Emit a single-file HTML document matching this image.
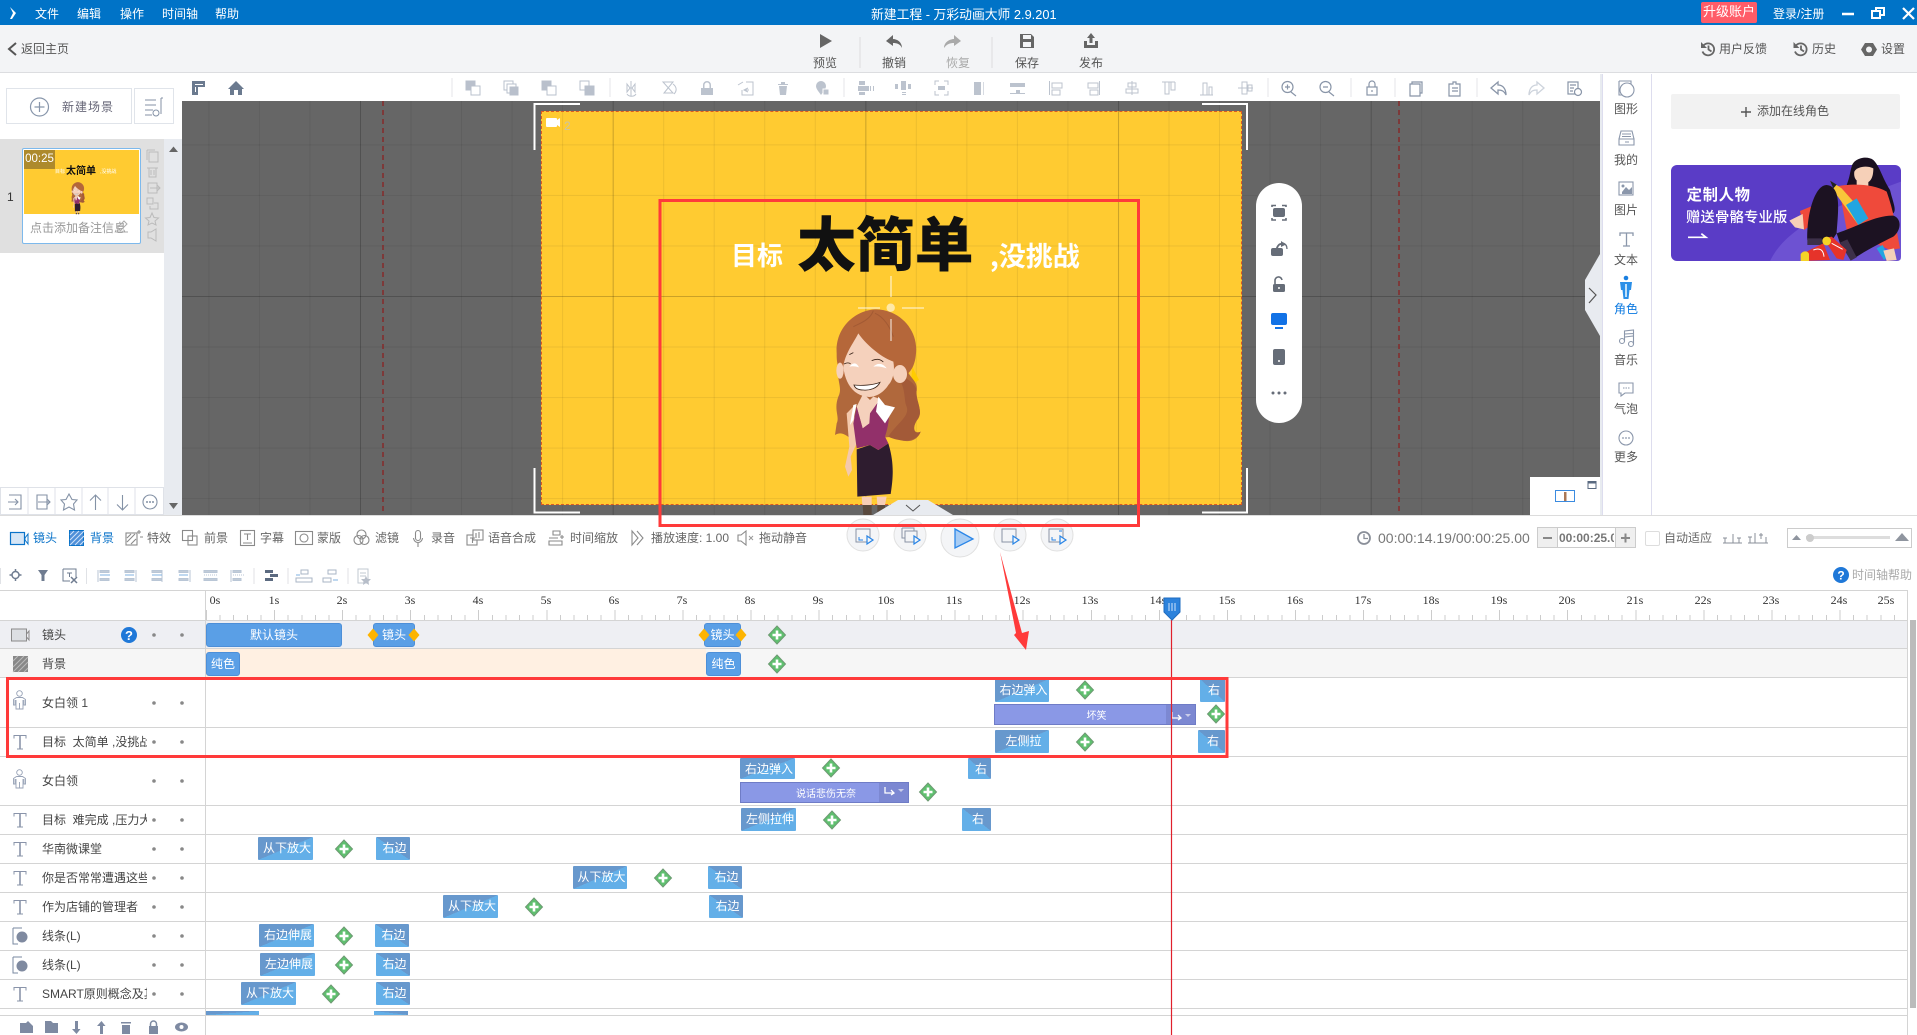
<!DOCTYPE html>
<html lang="zh"><head><meta charset="utf-8"><title>新建工程 - 万彩动画大师 2.9.201</title>
<style>
html,body{margin:0;padding:0;width:1917px;height:1035px;overflow:hidden;background:#fff}
body{position:relative;font:12px/16px "Liberation Sans","Noto Sans CJK SC",sans-serif;color:#555}
div,span{position:absolute;white-space:nowrap;box-sizing:border-box}
.w{color:#fff}.c{text-align:center}
.tb{top:55px;color:#555}
.g{color:#666;top:530px}
.bl{top:530px;color:#0a73c9}
.l{left:42px;color:#444;width:105px;overflow:hidden}
.rl{font:12px/16px "Liberation Serif",serif;color:#333;top:592px;width:30px;text-align:center}
.b{height:23px;line-height:22px;color:#fff;text-align:center;overflow:hidden;border-radius:1px;padding-left:3px}
.i{background:linear-gradient(to bottom right,#6798cd 50%,#63afe8 50%)}
.o{background:linear-gradient(to bottom left,#6798cd 50%,#63afe8 50%)}
.s{background:#5a9fe6;border:1px solid #4d8fd8;border-radius:3px;color:#fff;text-align:center;line-height:22px}
.ln{left:0;width:1907px;height:1px;background:#d4d4d4}
.p{background:#8a98e6;border:1px solid #6f7cc6;height:21px;color:#fff;font-size:10px;line-height:24px;text-align:center;padding-left:3px}
.pe{background:#7c88d2;top:0;bottom:0;right:0}
</style></head><body>

<div style="left:0;top:0;width:1917px;height:25px;background:#0073c7"></div>
<span class="w" style="left:35px;top:6px">文件</span><span class="w" style="left:77px;top:6px">编辑</span><span class="w" style="left:120px;top:6px">操作</span><span class="w" style="left:162px;top:6px">时间轴</span><span class="w" style="left:215px;top:6px">帮助</span>
<span class="w" style="left:871px;top:7px;font-size:12.8px">新建工程 - 万彩动画大师 2.9.201</span>
<div style="left:1701px;top:2px;width:56px;height:21px;background:#ff5c68;border-radius:2px;color:#fff;text-align:center;line-height:20px;font-size:13px">升级账户</div>
<span class="w" style="left:1773px;top:6px;font-size:12px">登录/注册</span>

<div style="left:0;top:25px;width:1917px;height:48px;background:#f3f4f6;border-bottom:1px solid #dcdde0"></div>
<span style="left:21px;top:41px">返回主页</span>
<span class="tb" style="left:813px">预览</span><span class="tb" style="left:882px">撤销</span><span class="tb" style="left:946px;color:#aaa">恢复</span><span class="tb" style="left:1015px">保存</span><span class="tb" style="left:1079px">发布</span>
<span style="left:1719px;top:41px">用户反馈</span><span style="left:1812px;top:41px">历史</span><span style="left:1881px;top:41px">设置</span>

<div style="left:6px;top:88px;width:126px;height:36px;border:1px solid #e0e4ea"></div>
<div style="left:134px;top:88px;width:40px;height:36px;border:1px solid #e0e4ea"></div>
<span style="left:62px;top:99px;letter-spacing:1px;color:#667">新建场景</span>
<div style="left:164px;top:139px;width:18px;height:376px;background:#e8ebf0"></div>
<div style="left:0;top:139px;width:164px;height:114px;background:#e0e0e0"></div>
<span style="left:7px;top:189px;color:#333">1</span>
<div style="left:22px;top:148px;width:119px;height:96px;background:#fff;border:1px solid #7db9ec;border-radius:2px"></div>
<div style="left:24px;top:150px;width:115px;height:64px;background:#ffcb31"></div>
<div style="left:24px;top:150px;width:31px;height:19px;background:#ad8a2c;color:#fff;line-height:18px;text-align:center;font-size:11.5px">00:25</div>
<span style="left:66px;top:165px;font-size:10px;font-weight:700;color:#111;line-height:14px">太简单</span>
<span style="left:55px;top:168px;font-size:5px;color:#fff;line-height:8px">目标</span>
<span style="left:100px;top:168px;font-size:5px;color:#fff;line-height:8px">,没挑战</span>
<div style="left:30px;top:220px;width:96px;overflow:hidden;color:#999;height:16px">点击添加备注信息</div>
<div style="left:0;top:487px;width:164px;height:28px;border:1px solid #dfe2e8"></div>

<div style="left:182px;top:74px;width:1418px;height:27px;background:#fff"></div>
<div style="left:1600px;top:74px;width:2px;height:441px;background:#e8ebf0"></div>

<div style="left:182px;top:101px;width:1418px;height:414px;background:#666;overflow:hidden">
 <div style="left:359px;top:10px;width:701px;height:394px;background:#ffcb31"></div>
 <div style="inset:0;background-image:linear-gradient(90deg,rgba(0,0,0,.15) 1px,transparent 1px),linear-gradient(rgba(0,0,0,.15) 1px,transparent 1px),linear-gradient(90deg,rgba(0,0,0,.07) 1px,transparent 1px),linear-gradient(rgba(0,0,0,.07) 1px,transparent 1px);background-size:252.7px 100%,100% 252.7px,50.54px 100%,100% 50.54px;background-position:178px 0,0 195px,26.4px 0,0 43.4px"></div>
 <div style="left:359px;top:10px;width:701px;height:394px;border:1px dashed #dd5a22"></div>
</div>

<span style="left:731px;top:237px;font:700 26px/36px 'Noto Sans CJK SC',sans-serif;color:#fff">目标</span>
<span style="left:797px;top:201px;font:900 59px/80px 'Noto Sans CJK SC',sans-serif;color:#111;letter-spacing:-.2px">太简单</span>
<span style="left:990px;top:237px;font:700 27px/36px 'Noto Sans CJK SC',sans-serif;color:#fff">,没挑战</span>

<div style="left:1256px;top:183px;width:46px;height:240px;background:#fff;border-radius:23px"></div>
<div style="left:1530px;top:477px;width:70px;height:38px;background:#fff"></div>

<div style="left:1602px;top:74px;width:50px;height:441px;background:#fff;border-left:1px solid #dde;border-right:1px solid #dde"></div>
<span style="left:1614px;top:101px">图形</span><span style="left:1614px;top:152px">我的</span><span style="left:1614px;top:202px">图片</span><span style="left:1614px;top:252px">文本</span><span style="left:1614px;top:301px;color:#0a78e0">角色</span><span style="left:1614px;top:352px">音乐</span><span style="left:1614px;top:401px">气泡</span><span style="left:1614px;top:449px">更多</span>
<div style="left:1671px;top:94px;width:229px;height:35px;background:#f2f2f2;border-radius:2px"></div>
<span style="left:1757px;top:103px;color:#555">添加在线角色</span>
<div style="left:1671px;top:165px;width:230px;height:96px;background:#5a3cc6;border-radius:6px"></div>

<div style="left:0;top:515px;width:1917px;height:1px;background:#dcdcdc"></div>
<span class="bl" style="left:33px">镜头</span><span class="bl" style="left:90px">背景</span>
<span class="g" style="left:147px">特效</span><span class="g" style="left:204px">前景</span><span class="g" style="left:260px">字幕</span><span class="g" style="left:317px">蒙版</span><span class="g" style="left:375px">滤镜</span><span class="g" style="left:431px">录音</span><span class="g" style="left:488px">语音合成</span><span class="g" style="left:570px">时间缩放</span><span class="g" style="left:651px">播放速度: 1.00</span><span class="g" style="left:759px">拖动静音</span>

<span style="left:1378px;top:530px;font-size:14px;color:#777">00:00:14.19/00:00:25.00</span>
<div style="left:1537px;top:527px;width:99px;height:21px;border:1px solid #ccc;background:#fff"></div>
<div style="left:1537px;top:527px;width:21px;height:21px;background:#efefef;border:1px solid #ccc"></div>
<div style="left:1615px;top:527px;width:21px;height:21px;background:#efefef;border:1px solid #ccc"></div>
<div style="left:1559px;top:530px;width:55px;overflow:hidden;font-weight:700;color:#777;font-size:12px">00:00:25.00</div>
<div style="left:1645px;top:531px;width:15px;height:15px;border:1px solid #ddd;border-radius:2px"></div>
<span style="left:1664px;top:530px;color:#666">自动适应</span>
<div style="left:1787px;top:528px;width:125px;height:20px;border:1px solid #ccc"></div>
<div style="left:1806px;top:536px;width:84px;height:3px;background:#ddd"></div>
<div style="left:1806px;top:534px;width:8px;height:8px;border-radius:4px;background:#ccc"></div>
<span style="left:1852px;top:567px;color:#aaa">时间轴帮助</span>

<div class="ln" style="top:590px"></div>
<div style="left:205.7px;top:610px;width:1701px;height:10px;background:repeating-linear-gradient(90deg,#ccc 0 1px,transparent 1px 68.06px) 0 0/100% 10px no-repeat,repeating-linear-gradient(90deg,#ccc 0 1px,transparent 1px 13.612px) 0 5px/100% 5px no-repeat"></div>
<span class="rl" style="left:200px">0s</span><span class="rl" style="left:259px">1s</span><span class="rl" style="left:327px">2s</span><span class="rl" style="left:395px">3s</span><span class="rl" style="left:463px">4s</span><span class="rl" style="left:531px">5s</span><span class="rl" style="left:599px">6s</span><span class="rl" style="left:667px">7s</span><span class="rl" style="left:735px">8s</span><span class="rl" style="left:803px">9s</span><span class="rl" style="left:871px">10s</span><span class="rl" style="left:939px">11s</span><span class="rl" style="left:1007px">12s</span><span class="rl" style="left:1075px">13s</span><span class="rl" style="left:1143px">14s</span><span class="rl" style="left:1212px">15s</span><span class="rl" style="left:1280px">16s</span><span class="rl" style="left:1348px">17s</span><span class="rl" style="left:1416px">18s</span><span class="rl" style="left:1484px">19s</span><span class="rl" style="left:1552px">20s</span><span class="rl" style="left:1620px">21s</span><span class="rl" style="left:1688px">22s</span><span class="rl" style="left:1756px">23s</span><span class="rl" style="left:1824px">24s</span><span class="rl" style="left:1871px">25s</span>

<div style="left:0;top:620px;width:1907px;height:28px;background:#eeeff3"></div>
<div style="left:0;top:648px;width:1907px;height:30px;background:#f6f6f6"></div>
<div style="left:206px;top:649px;width:500px;height:28px;background:#fff0e2"></div>
<div class="ln" style="top:620px"></div><div class="ln" style="top:648px"></div><div class="ln" style="top:677px"></div><div class="ln" style="top:727px"></div><div class="ln" style="top:756px"></div><div class="ln" style="top:805px"></div><div class="ln" style="top:834px"></div><div class="ln" style="top:863px"></div><div class="ln" style="top:892px"></div><div class="ln" style="top:921px"></div><div class="ln" style="top:950px"></div><div class="ln" style="top:979px"></div><div class="ln" style="top:1008px"></div><div class="ln" style="top:1015px"></div>
<div style="left:205px;top:590px;width:1px;height:445px;background:#d4d4d4"></div>
<div style="left:1907px;top:590px;width:1px;height:445px;background:#d4d4d4"></div>
<div style="left:1910px;top:620px;width:6px;height:388px;background:#bbb"></div>

<span class="l" style="top:627px">镜头</span><span class="l" style="top:656px">背景</span><span class="l" style="top:695px">女白领 1</span><span class="l" style="top:734px">目标&nbsp;&nbsp;太简单 ,没挑战</span><span class="l" style="top:773px">女白领</span><span class="l" style="top:812px">目标&nbsp;&nbsp;难完成 ,压力大</span><span class="l" style="top:841px">华南微课堂</span><span class="l" style="top:870px">你是否常常遭遇这些</span><span class="l" style="top:899px">作为店铺的管理者</span><span class="l" style="top:928px">线条(L)</span><span class="l" style="top:957px">线条(L)</span><span class="l" style="top:986px">SMART原则概念及其</span>

<div class="s" style="left:206px;top:623px;width:136px;height:24px">默认镜头</div>
<div class="s" style="left:373px;top:623px;width:42px;height:24px">镜头</div>
<div class="s" style="left:704px;top:623px;width:37px;height:24px">镜头</div>
<div class="s" style="left:206px;top:652px;width:34px;height:24px">纯色</div>
<div class="s" style="left:706px;top:652px;width:35px;height:24px">纯色</div>

<div class="b i" style="left:995px;top:679px;width:54px">右边弹入</div>
<div class="b o" style="left:1200px;top:679px;width:25px">右</div>
<div class="p" style="left:994px;top:704px;width:202px">坏笑<div class="pe" style="left:171px"></div></div>
<div class="b i" style="left:995px;top:730px;width:54px">左侧拉</div>
<div class="b o" style="left:1198px;top:730px;width:27px">右</div>
<div class="b i" style="left:740px;top:758px;width:55px;height:21px">右边弹入</div>
<div class="b o" style="left:968px;top:758px;width:23px;height:21px">右</div>
<div class="p" style="left:740px;top:782px;width:169px">说话悲伤无奈<div class="pe" style="left:138px"></div></div>
<div class="b i" style="left:741px;top:808px;width:55px">左侧拉伸</div>
<div class="b o" style="left:962px;top:808px;width:29px">右</div>
<div class="b i" style="left:258px;top:837px;width:55px">从下放大</div>
<div class="b o" style="left:376px;top:837px;width:34px">右边</div>
<div class="b i" style="left:573px;top:866px;width:54px">从下放大</div>
<div class="b o" style="left:708px;top:866px;width:34px">右边</div>
<div class="b i" style="left:443px;top:895px;width:55px">从下放大</div>
<div class="b o" style="left:709px;top:895px;width:34px">右边</div>
<div class="b i" style="left:259px;top:924px;width:55px">右边伸展</div>
<div class="b o" style="left:375px;top:924px;width:34px">右边</div>
<div class="b i" style="left:260px;top:953px;width:55px">左边伸展</div>
<div class="b o" style="left:376px;top:953px;width:34px">右边</div>
<div class="b i" style="left:241px;top:982px;width:55px">从下放大</div>
<div class="b o" style="left:376px;top:982px;width:34px">右边</div>
<div class="i" style="left:206px;top:1011px;width:53px;height:4px"></div>
<div class="o" style="left:374px;top:1011px;width:34px;height:4px"></div>

<svg style="position:absolute;left:0;top:0" width="1917" height="1035" viewBox="0 0 1917 1035">
<defs>
<g id="p"><polygon points="0,-9 8.5,0 0,9 -8.5,0" fill="#5fc06f" stroke="#6d9a72"/><path d="M0-4.5V4.5M-4.5 0H4.5" stroke="#fff" stroke-width="2.6"/></g>
<g id="d"><polygon points="0,-6.5 5.5,0 0,6.5 -5.5,0" fill="#fdb400"/></g>
<g id="tt" fill="none" stroke="#8a94aa"><path d="M-6-3.5V-6.5H6V-3.5M-3 7H3"/><path d="M0-6.5V7" stroke-width="1.6"/></g>
<g id="dots"><circle cx="0" r="1.8" fill="#888"/><circle cx="28" r="1.8" fill="#888"/></g>
<g id="fig" fill="none" stroke="#97a2b6" stroke-width=".9"><circle cx="0" cy="-6.500" r="2.800"/><path d="M-3-2.500H3L6-.5V5H4.500V0M-3-2.500L-6-.5V5H-4.500V0M-3.500 0V9H3.500V0M0 3V9"/></g>
<g id="shp"><path d="M-7-8H2M-7-8V8H-2" fill="none" stroke="#7a88a0"/><circle cx="2" cy="1" r="5.500" fill="#7f8aa0"/></g>
<g id="girl">
 <path d="M817 560l20 40-25 15z" fill="#fc0"/>
 <path d="M600 560C585 600 610 620 595 650 580 690 600 710 590 730L585 765C610 750 625 775 640 780L760 770C790 790 830 790 842 755 820 765 815 740 835 715 850 690 825 660 830 630 835 600 800 590 800 560Z" fill="#b0683c"/>
 <path d="M770 590C800 620 790 660 800 680 810 710 770 730 745 770 775 785 830 790 842 755 820 765 815 740 835 715 850 690 825 660 830 630 825 610 800 590 770 590Z" fill="#a35a38"/>
 <path d="M590 520C585 440 650 388 710 388 780 390 835 450 828 520 825 560 810 580 790 590L610 590C590 560 590 540 590 520Z" fill="#b5673a"/>
 <path d="M700 392C690 420 660 430 640 440M705 400C730 410 750 440 760 470" stroke="#a25a34" stroke-width="3" fill="none"/>
 <path d="M620 700L640 680 650 790 632 830 636 870 625 890 615 860 628 800Z" fill="#f4c9ac"/>
 <path d="M670 640L690 660 700 650 715 655 706 700 690 730 668 745 650 680Z" fill="#f5d1bc"/>
 <path d="M610 560C615 520 640 490 655 460 675 490 720 530 760 545 765 570 760 600 745 615 730 640 700 655 680 650 640 645 615 610 610 560Z" fill="#f5d1bc"/>
 <ellipse cx="780" cy="582" rx="21" ry="27" fill="#f5d1bc"/><ellipse cx="600" cy="572" rx="11" ry="24" fill="#f5d1bc"/>
 <path d="M628 560C640 545 650 548 657 562 645 558 635 558 628 560ZM700 560C712 548 728 548 740 565 725 560 712 558 700 560Z" fill="#fff"/>
 <path d="M628 524L640 518M695 542C710 535 722 538 730 546M612 552C620 548 628 548 632 552" stroke="#3a2418" stroke-width="2.5" fill="none"/>
 <path d="M642 615C665 618 700 615 720 607 712 625 690 632 670 630 655 630 645 625 642 615Z" fill="#fff" stroke="#3a2418" stroke-width="2.5"/>
 <path d="M650 808L652 950 752 942C762 880 760 840 745 790L715 810 690 795Z" fill="#2e1c2f"/>
 <path d="M650 680L640 730 650 805 690 795 715 810 745 790 735 770C745 740 750 710 745 680L715 665 690 700 688 730 668 745Z" fill="#92306a"/>
 <path d="M640 675L650 672 640 720 630 735ZM708 695L735 730 765 682 735 675 715 650Z" fill="#fff"/>
 <path d="M665 950H695V975H667ZM710 950H740L735 975H712Z" fill="#f6cdb6"/>
 <path d="M668 975H695V1005H670ZM712 975H735V1005H712Z" fill="#5a4a3e"/>
</g>
</defs>

<!-- title bar -->
<path d="M10 7L16 13 12 19H10L13 13Z" fill="#fff"/>
<path d="M1842 14H1854" stroke="#fff" stroke-width="2.5"/>
<path d="M1876 11V8H1884V15H1880M1872 11H1880V18H1872Z" fill="none" stroke="#fff" stroke-width="2"/>
<path d="M1903 8L1914 19M1914 8L1903 19" stroke="#fff" stroke-width="2.2"/>

<!-- top toolbar -->
<path d="M16 43L9 49 16 55" fill="none" stroke="#555" stroke-width="2"/>
<path d="M820 34L832 41 820 48Z" fill="#666"/>
<path d="M902 48C902 42 897 39 893 39V35L886 41 893 46V43C897 43 900 44 902 48Z" fill="#666"/>
<path d="M945 48C945 42 951 39 955 39V35L962 41 955 46V43C951 43 948 44 945 48Z" fill="#aaa" transform="translate(-1 0)"/>
<path d="M1020 34H1031L1034 37V48H1020Z" fill="#666"/><rect x="1023" y="35" width="8" height="4" fill="#f3f4f6"/><rect x="1023" y="42" width="8" height="5" fill="#f3f4f6"/>
<path d="M1084 41H1087V45H1095V41H1098V48H1084ZM1091 33L1095 38H1092.5V43H1089.500V38H1087Z" fill="#666"/>
<path d="M860 37V68M992 37V68" stroke="#ddd"/>
<g fill="none" stroke="#666" stroke-width="1.8">
<path d="M1703.500 45.500A6 6 0 1 1 1702.500 51.500"/><path d="M1708.500 45.500V49.500L1711.500 51.500"/>
<path d="M1796 45.500A6 6 0 1 1 1795 51.500"/><path d="M1801 45.500V49.500L1804 51.500"/>
</g>
<path d="M1701 42V48H1707ZM1793.500 42V48H1799.500Z" fill="#666"/>
<polygon points="1865,43 1873,43 1877,49.500 1873,56 1865,56 1861,49.500" fill="#666"/><circle cx="1869" cy="49.500" r="3" fill="#f3f4f6"/>

<!-- left panel -->
<circle cx="39.500" cy="107" r="9" fill="none" stroke="#8896ab" stroke-width="1.2"/><path d="M34.500 107H44.500M39.500 102V112" stroke="#8896ab" stroke-width="1.2"/>
<path d="M145 100H156M145 105H156M145 110H153M145 115H152M161 98V114" stroke="#8492a6" fill="none"/><path d="M161 98H163" stroke="#8492a6"/><circle cx="156" cy="113" r="3" fill="none" stroke="#8492a6"/>
<path d="M169 152L178 152 173.500 146.500Z" fill="#666"/>
<path d="M169 503H178L173.500 509Z" fill="#666"/>
<g fill="none" stroke="#bbb">
 <path d="M149 152H158V162H149ZM147 150H155M147 150V160"/>
 <path d="M147 168H158M149 168V177H156V168M151 170V175M154 170V175"/>
 <path d="M148 183H157V193H148ZM150 188H160M157 185L160 188 157 191"/>
 <path d="M147 198H153V204H147ZM152 209H158V203H154M150 206V209H152"/>
 <path d="M152 213L154 217.500 158.500 218 155 221 156 225 152 223 148 225 149 221 145.500 218 150 217.500Z"/>
 <path d="M148 232H151L156 229V241L151 238H148Z"/>
</g>
<path d="M118 227L124 221 127 224 121 230H118ZM116 232H128" fill="none" stroke="#aaa"/>
<path d="M28 487V515M55 487V515M82 487V515M108 487V515M135 487V515" stroke="#dfe2e8"/>
<g fill="none" stroke="#8492a6" stroke-width="1.1">
 <path d="M9 495H21V509H9M8 502H18M15 499L18 502 15 505"/>
 <path d="M37 495H47V509H37ZM38 502H50M47 499L50 502 47 505"/>
 <path d="M69 494L72 499.500 77 500 73.500 504 74.500 510 69 507 63.500 510 64.500 504 61 500 66 499.500Z"/>
 <path d="M95.500 510V495M90 500.500L95.500 495 101 500.500"/>
 <path d="M122.500 495V510M117 504.500L122.500 510 128 504.500"/>
 <circle cx="150" cy="502" r="7"/>
</g>
<circle cx="147" cy="502" r="1" fill="#8492a6"/><circle cx="150" cy="502" r="1" fill="#8492a6"/><circle cx="153" cy="502" r="1" fill="#8492a6"/>
<use href="#girl" transform="translate(41 162) scale(.052)"/>

<!-- canvas toolbar -->
<path d="M192 81H205V87H198V95H192Z" fill="#6b7a8f"/><path d="M195 84H203V85H195ZM195 87V92H196V87Z" fill="#fff"/>
<path d="M236 81L244 89H242V95H238V90H234V95H230V89H228Z" fill="#6b7a8f"/>
<path d="M452 78V97M610 78V97M844 78V97M1268 78V97M1351 78V97M1395 78V97M1477 78V97" stroke="#e4e6ea"/>
<g fill="#b9c0cc" stroke="#b9c0cc">
 <rect x="466" y="81" width="9" height="9"/><rect x="471" y="86" width="9" height="9" fill="#fff"/>
 <rect x="504" y="81" width="9" height="9" fill="#fff"/><rect x="507" y="84" width="9" height="9" fill="#fff"/><rect x="510" y="87" width="8" height="8"/>
 <rect x="542" y="81" width="9" height="9"/><rect x="547" y="86" width="9" height="9" fill="#fff"/>
 <rect x="580" y="81" width="9" height="9" fill="#fff"/><rect x="585" y="86" width="9" height="9"/>
</g>
<g fill="none" stroke="#bcc3ce">
 <path d="M631 81V96M627 84L630 88 627 92ZM635 84L632 88 635 92ZM627 94C629 97 634 97 636 94"/>
 <path d="M663 82H673L664 93H673ZM673 84C677 87 677 91 674 94"/>
 <path d="M738 85L743 82M746 82H753V95H742V90M748 88L744 90 748 92M744 90H749"/>
 <path d="M1049.500 81V95M1052 83H1062V88H1052ZM1052 90H1060V95H1052Z"/>
 <path d="M1099.500 81V95M1088 83H1098V88H1088ZM1090 90H1098V95H1090Z"/>
 <path d="M1132 81V95M1128 83H1136V87H1128ZM1126 89H1138V93H1126Z"/>
 <path d="M1162 82H1175M1165 82V94H1169V82M1171 82V90H1175V82"/>
 <path d="M1200 95H1213M1203 83V95H1207V83ZM1209 87V95H1212V87Z"/>
 <path d="M1238 88H1253M1242 82V94H1247V82ZM1248 85V91H1252V85Z"/>
</g>
<g fill="#bcc3ce">
 <path d="M701 88H713V95H701Z"/><path d="M703 88V85A4 4 0 0 1 711 85V88H709.500V85A2.500 2.500 0 0 0 704.500 85V88Z"/>
 <path d="M778 84H788V85H778ZM781 82H785V84H781ZM779 86H787L786 95H780Z"/>
 <path d="M821 81A5 5 0 0 1 826 86C826 89 823 92 821 95 819 92 816 89 816 86A5 5 0 0 1 821 81Z"/><rect x="823" y="89" width="6" height="6" stroke="#fff"/>
 <rect x="859" y="81" width="6" height="4"/><rect x="858" y="86" width="11" height="5"/><rect x="859" y="92" width="6" height="3"/><rect x="870" y="86" width="1" height="5"/><rect x="873" y="86" width="1" height="5"/>
 <rect x="901" y="81" width="5" height="9"/><rect x="895" y="84" width="3" height="5"/><rect x="908" y="84" width="3" height="5"/><rect x="902" y="92" width="4" height="1"/><rect x="902" y="94" width="4" height="1"/>
 <rect x="974" y="82" width="7" height="13"/><rect x="983" y="82" width="1" height="13" opacity=".6"/>
 <rect x="1010" y="83" width="15" height="4"/><rect x="1010" y="93" width="15" height="1"/><rect x="1016" y="90" width="4" height="3"/>
 <rect x="938" y="86" width="7" height="4"/>
</g>
<path d="M935 85V81H939M944 81H948V85M948 91V95H944M939 95H935V91" fill="none" stroke="#bcc3ce"/>
<g fill="none" stroke="#8995a8" stroke-width="1.2">
 <rect x="1367" y="87" width="10" height="8"/><path d="M1369 87V84A3 3 0 0 1 1375 84V87M1372 90V92"/>
 <path d="M1449 84H1453V82H1456V84H1460V96H1449Z"/><path d="M1452 88H1458M1452 91H1458"/>
 <path d="M1410 84H1420V96H1410ZM1412 84V82H1422V93H1420"/>
 <rect x="1568" y="82" width="10" height="12"/><path d="M1570 85H1576M1570 88H1574M1570 91H1573"/><circle cx="1578" cy="92" r="3.500" fill="#fff"/>
 <path d="M1282 87A5.500 5.500 0 1 0 1293 87 5.500 5.500 0 1 0 1282 87M1291 92L1296 96M1285 87H1290M1287.500 84.500V89.500"/>
 <path d="M1320 87A5.500 5.500 0 1 0 1331 87 5.500 5.500 0 1 0 1320 87M1329 92L1334 96M1323 87H1328"/>
</g>
<path d="M1491 88L1498 82V85C1503 85 1506 89 1506 95 1504 91 1502 90 1498 90V94Z" fill="none" stroke="#8995a8" stroke-width="1.3"/>
<path d="M1544 88L1537 82V85C1532 85 1529 89 1529 95 1531 91 1533 90 1537 90V94Z" fill="none" stroke="#cdd3dc" stroke-width="1.3"/>

<!-- canvas overlays -->
<path d="M383 101V515M1399 101V515" stroke="#8d1c1c" stroke-width="1.200" stroke-dasharray="5 4"/>
<path d="M580 104H534.500V150M1202 104H1247V150M534.500 468V512.500H580M1247 468V512.500H1202" fill="none" stroke="#fff" stroke-width="2"/>
<rect x="546" y="118" width="11" height="9" rx="1" fill="#fff"/><path d="M557 120L560 118V127L557 125Z" fill="#fff"/>
<text x="564" y="130" font-family="Liberation Sans" font-size="12" fill="#c9c4a8">2</text>
<svg x="640" y="180" width="520" height="340" viewBox="0 0 1560 1020"><use href="#girl"/></svg>
<path d="M891 276V297M891 319V341M858 308H880M902 308H924" stroke="#fff" stroke-opacity=".7" stroke-width="1.300"/><circle cx="890.700" cy="307.700" r="4.200" fill="#ffe9a8"/>
<polygon points="873,515 898,500 928,500 953,515" fill="#e8ebf0"/><path d="M906 505L913 511 920 505" fill="none" stroke="#555"/>
<polygon points="1600,254 1585,280 1585,310 1600,336" fill="#e8ebf0"/><path d="M1589 288L1596 295 1589 303" fill="none" stroke="#555" stroke-width="1.200"/>

<!-- pill icons -->
<g fill="#666d78">
 <rect x="1273" y="208" width="12" height="9" rx="2"/><path d="M1272 207V205.500H1276M1282 205.500H1286V207M1286 218V220H1282M1276 220H1272V218" fill="none" stroke="#666d78" stroke-width="1.600"/>
 <rect x="1271" y="248" width="12" height="8" rx="2"/><path d="M1276 248C1277 245 1279 243 1281 243V241L1286 244.500 1281 247V245C1279.500 245 1278.500 246.500 1278 248Z"/><path d="M1283 243C1286 244 1287 246 1287 249" fill="none" stroke="#666d78" stroke-width="1.300"/>
 <rect x="1273" y="284" width="12" height="8" rx="1.500"/><path d="M1275 284V281A3.500 3.500 0 0 1 1282 280" fill="none" stroke="#666d78" stroke-width="1.600"/>
 <rect x="1273" y="349" width="12" height="16" rx="2"/>
 <circle cx="1273" cy="393" r="1.500"/><circle cx="1279" cy="393" r="1.500"/><circle cx="1285" cy="393" r="1.500"/>
</g>
<circle cx="1279" cy="288" r="1" fill="#fff"/><circle cx="1279" cy="361" r="1" fill="#fff"/>
<rect x="1271" y="313" width="16" height="12" rx="2" fill="#1272e6"/><rect x="1275" y="327" width="8" height="2" fill="#1272e6"/>

<!-- mini map -->
<rect x="1555.500" y="490.500" width="19" height="11" fill="#fff" stroke="#3b8be0"/><rect x="1564" y="492" width="2.500" height="9" fill="#a75"/>
<rect x="1588" y="481.500" width="8" height="7" fill="#fff" stroke="#5a6a80"/><rect x="1588" y="481" width="8" height="2.500" fill="#5a6a80"/>

<!-- right strip icons -->
<g fill="none" stroke="#8b97ab" stroke-width="1.100">
 <path d="M1619 81H1631V86"/><path d="M1619 81V95H1623"/><circle cx="1627" cy="90" r="7" fill="#fff"/>
 <path d="M1619 139H1634V145H1619ZM1619 139L1621 131H1632L1634 139M1622 134H1631M1622 136.500H1631M1625 142H1629"/>
 <rect x="1619" y="182" width="14" height="13"/>
 <path d="M1620 236V233H1633V236M1626.500 233V246M1623 246H1630" stroke-width="1.300"/>
 <path d="M1619 383H1633V393H1625L1621 396V393H1619Z"/>
 <circle cx="1626" cy="438" r="7"/>
 <circle cx="1622" cy="341" r="2.500"/><circle cx="1631" cy="344" r="2.500"/><path d="M1624.500 341V331L1633.500 330V344M1625 334L1633 333.500M1625 337L1633 336"/>
</g>
<path d="M1622 192L1626 187 1629 190 1632 187V194H1622Z" fill="#8b97ab"/><circle cx="1623" cy="186" r="1.500" fill="#8b97ab"/>
<path d="M1623 388H1630" stroke="#8b97ab" stroke-dasharray="1.500 1"/>
<circle cx="1623" cy="438" r=".9" fill="#8b97ab"/><circle cx="1626" cy="438" r=".9" fill="#8b97ab"/><circle cx="1629" cy="438" r=".9" fill="#8b97ab"/>
<circle cx="1626" cy="278" r="2.300" fill="#1a7fe0"/><path d="M1620 282H1632L1631 290H1629.500L1628.500 299H1623.500L1622.500 290H1621Z" fill="#2a8fe8"/><path d="M1625 284V297H1627V284Z" fill="#bfe0fa"/>
<path d="M1741 112H1751M1746 107V117" stroke="#555" stroke-width="1.400"/>

<!-- banner -->
<svg x="1660" y="150" width="250" height="120" viewBox="0 0 750 360">
 <path d="M330 333C380 230 520 170 723 95V321Q723 333 711 333Z" fill="#6d52d2"/>
 <path d="M575 50C580 25 620 15 640 30 660 50 665 80 690 120 700 160 710 180 700 190L620 110 560 105C570 80 570 65 575 50Z" fill="#1a1020"/>
 <rect x="590" y="92" width="35" height="20" fill="#f6d0b8"/>
 <path d="M583 65C590 50 620 45 640 55 640 85 630 100 610 100 590 98 580 85 583 65Z" fill="#f6d0b8"/>
 <path d="M525 110C570 100 640 100 680 125 700 180 710 240 720 295L690 300 560 240 540 130Z" fill="#ef4a3b"/>
 <polygon points="420,183 452,170 470,215 432,240" fill="#ef4a3b"/>
 <path d="M388 212L412 200 428 192 432 238 405 232Z" fill="#f6d0b8"/>
 <polygon points="510,92 545,115 625,205 595,225 530,135" fill="#f8c63a"/>
 <polygon points="558,165 590,145 625,205 595,225" fill="#22a5e0"/>
 <polygon points="510,92 530,104 520,115" fill="#222"/>
 <path d="M442 270C440 190 465 105 500 105 545 110 535 180 530 250L520 265 490 280Z" fill="#1c1222"/>
 <path d="M442 265L485 265 490 285 442 285Z" fill="#3d3049"/>
 <path d="M530 250C590 230 650 195 700 197 725 205 725 240 700 260 660 280 620 300 575 330L540 280Z" fill="#1c1222"/>
 <path d="M540 278L562 268 590 322 572 332Z" fill="#3d3049"/>
 <polygon points="650,295 668,285 685,320 672,330" fill="#22a5e0"/>
 <path d="M670 302L702 295 710 330 680 333Z" fill="#f6d0b8"/>
 <path d="M425 315C445 300 480 285 490 280L510 330 425 333Z" fill="#e6332a"/>
 <path d="M422 312C430 300 445 303 447 312V333H422Z" fill="#f5d327"/>
 <path d="M490 265L515 260 560 300 550 330 530 325Z" fill="#e6332a"/>
 <circle cx="500" cy="273" r="13" fill="#f5d327"/>
 <path d="M460 300C480 292 490 300 492 320M515 280L548 298" stroke="#fff" stroke-width="3" fill="none"/>
 <text x="80" y="150" font-family="Noto Sans CJK SC" font-weight="700" font-size="46" letter-spacing="2" fill="#fff">定制人物</text>
 <text x="78" y="216" font-family="Noto Sans CJK SC" font-weight="500" font-size="43" fill="#fff" textLength="304">赠送骨骼专业版</text>
 <path d="M84 262H138L124 251" fill="none" stroke="#fff" stroke-width="5"/>
</svg>

<!-- play controls -->
<g fill="#f4f5f7" stroke="#e0e0e0"><circle cx="863" cy="535" r="16"/><circle cx="910" cy="535" r="16"/><circle cx="960" cy="538" r="19"/><circle cx="1010" cy="535" r="16"/><circle cx="1057" cy="535" r="16"/></g>
<g fill="none" stroke="#8a94a6">
 <path d="M856 529H870V542H856Z"/><path d="M905 531H917V542H905Z"/><path d="M902 528H914V531M902 528V538H905"/><path d="M1002 529H1016V542H1002Z"/><path d="M1049 529H1063V542H1049Z"/>
</g>
<g fill="none" stroke="#2784e6"><path d="M859 537V540H863"/><path d="M1052 537V540H1056M1059 531H1062"/></g>
<g fill="#f4f5f7" stroke="#2784e6" stroke-width="1.200"><path d="M867 536L873 540 867 544Z"/><path d="M914 536L920 540 914 544Z"/><path d="M1013 536L1019 540 1013 544Z"/><path d="M1060 536L1066 540 1060 544Z"/></g>
<path d="M955 529L973 539 955 548Z" fill="#a9cdf4" stroke="#2b86e8" stroke-width="1.300"/>

<!-- effect toolbar -->
<rect x="10.500" y="532.500" width="14" height="12" fill="#d6e6f6" stroke="#0a73c9" stroke-width="1.200"/><path d="M25 538L28 534V544L25 540Z" fill="none" stroke="#0a73c9"/>
<rect x="69.500" y="530.500" width="14" height="15" fill="#4f8fd8" stroke="#0a73c9"/><path d="M70 535L74 531M70 540L79 531M70 545L84 531M75 545L84 536M80 545L84 541" stroke="#cfe3f8"/>
<g fill="none" stroke="#8a8a8a" stroke-width="1.100">
 <rect x="126" y="533" width="11" height="12"/><path d="M127 542L135 534M127 538L131 534M131 544L136 539M139 530V534M137 532H141M140 537H143"/>
 <rect x="182.500" y="530.500" width="10" height="10"/><rect x="188" y="536" width="9" height="9"/>
 <rect x="240.500" y="530.500" width="14" height="15"/><path d="M244 534H251M247.500 534V540M243 543H252"/>
 <rect x="295.500" y="531.500" width="17" height="13"/><circle cx="304" cy="538" r="4"/>
 <circle cx="361.500" cy="534.500" r="4.500"/><circle cx="358.500" cy="540" r="4.500"/><circle cx="364.500" cy="540" r="4.500"/>
 <rect x="415.500" y="530.500" width="5" height="10" rx="2.500"/><path d="M413.500 538C414 544 422 544 422.500 538M418 543V547"/>
 <rect x="467" y="535" width="10" height="10"/><rect x="473" y="530" width="10" height="10" fill="#fff"/><path d="M470 538H475M472.500 538V543M476 533V538M479 532V538"/>
 <path d="M553 531H560V535H553ZM549 538H558M549 541H562V545H549ZM562 535V539M560 537H564"/>
 <path d="M632 531L638 538 632 545ZM637 531L643 538 637 545"/>
 <path d="M738 535H741L746 531V545L741 541H738Z"/>
</g>
<path d="M749 536L753 540M753 536L749 540" stroke="#999"/>
<circle cx="1364" cy="538" r="6" fill="none" stroke="#8a8f99" stroke-width="1.800"/><path d="M1364 534V538.500H1368" fill="none" stroke="#8a8f99" stroke-width="1.300"/>
<path d="M1543 538H1552" stroke="#888" stroke-width="2"/><path d="M1621 538H1630M1625.500 533.500V542.500" stroke="#888" stroke-width="2"/>
<path d="M1723 543H1742M1725 543V538M1723 538H1727M1733 543V534M1737 538H1741M1739 538V543M1748 543H1768M1750 543V537M1748 537H1752M1755 533V543M1761 533V539M1759 535H1763M1766 537V543" fill="none" stroke="#8a8f99"/>
<polygon points="1792,540 1801,540 1796.500,535" fill="#8f959f"/><polygon points="1895,541 1909,541 1902,533" fill="#8f959f"/>
<circle cx="1841" cy="575" r="8" fill="#1f78d8"/>
<text x="1841" y="579.500" font-family="Liberation Sans" font-weight="700" font-size="12" fill="#fff" text-anchor="middle">?</text>

<!-- timeline toolbar -->
<circle cx="15.500" cy="575" r="3.500" fill="none" stroke="#6f7c90" stroke-width="1.500"/><path d="M15.500 569V571M15.500 579V581M9.500 575H11.500M19.500 575H21.500" stroke="#6f7c90" stroke-width="1.500"/>
<path d="M38 570H48L44.500 575V581H41.500V575Z" fill="#6f7c90"/>
<path d="M63 569H76V577M63 569V581H70M67 573H72M69.500 573V577" fill="none" stroke="#6f7c90"/><path d="M71 577L77 583M77 577L71 583" stroke="#6f7c90" stroke-width="1.500"/>
<path d="M86.500 568V584M254 568V584M288 568V584M348 568V584M.5 568V584" stroke="#e0e2e6"/>
<g stroke="#b9c6d6" fill="#c2ccd8">
 <path d="M98 570V582" fill="none"/><rect x="100" y="570.500" width="9" height="2"/><rect x="100" y="578.500" width="9" height="2"/><path d="M100 575H110" fill="none" stroke="#7fb2e0"/>
 <path d="M136 570V582" fill="none"/><rect x="125" y="570.500" width="9" height="2"/><rect x="125" y="578.500" width="9" height="2"/><path d="M125 575H134" fill="none" stroke="#7fb2e0"/>
 <path d="M162 570V582" fill="none"/><rect x="152" y="570.500" width="9" height="2"/><rect x="152" y="578.500" width="9" height="2"/><path d="M152 575H162" fill="none" stroke="#7fb2e0"/>
 <path d="M190 570V582" fill="none"/><rect x="179" y="570.500" width="9" height="2"/><rect x="179" y="578.500" width="9" height="2"/><path d="M179 575H188" fill="none" stroke="#7fb2e0"/>
 <rect x="204" y="570.500" width="13" height="2"/><rect x="204" y="578.500" width="13" height="2"/><path d="M204 575H217" fill="none" stroke-dasharray="1 1"/>
 <path d="M231 570V582" fill="none"/><rect x="233" y="570.500" width="8" height="2"/><rect x="233" y="578.500" width="8" height="2"/><path d="M233 575H245" fill="none" stroke-dasharray="1 1"/>
</g>
<rect x="265" y="570" width="8" height="3" fill="#5c6a80"/><rect x="265" y="578" width="8" height="3" fill="#5c6a80"/><rect x="270" y="574" width="8" height="3" fill="#5c6a80"/>
<path d="M301 574H308V570H301ZM296 582H312V578H296Z" fill="none" stroke="#aab6c6"/><path d="M296 575H300" stroke="#7fb2e0"/>
<path d="M328 570H336V574H328ZM323 578H331V582H323Z" fill="none" stroke="#aab6c6"/><path d="M333 580H338" stroke="#7fb2e0"/>
<path d="M358 569H368V583H358ZM360 573H366M360 576H366" fill="none" stroke="#c2c8d2"/><path d="M366 576L367.500 579 371 579 368.500 581.500 369 585 366 583 363 585 363.500 581.500 361 579 364.500 579Z" fill="#b7bec9"/>

<!-- row icons -->
<rect x="11.500" y="629" width="15" height="12" fill="#dcdfe3" stroke="#8a8a8a"/><path d="M26.500 634L29 631V640L26.500 637Z" fill="none" stroke="#8a8a8a"/>
<rect x="13" y="656" width="15" height="16" fill="#888"/><path d="M13 661L18 656M13 667L24 656M13 672L28 657M18 672L28 662M24 672L28 668" stroke="#bbb"/>
<use href="#fig" x="19.500" y="700"/><use href="#fig" x="19.500" y="779"/>
<use href="#tt" x="20" y="742"/><use href="#tt" x="20" y="820"/><use href="#tt" x="20" y="849"/><use href="#tt" x="20" y="878"/><use href="#tt" x="20" y="907"/><use href="#tt" x="20" y="994"/>
<use href="#shp" x="20" y="936"/><use href="#shp" x="20" y="965"/>
<circle cx="129" cy="635" r="8" fill="#1f78d8"/><text x="129" y="640" font-family="Liberation Sans" font-weight="700" font-size="13" fill="#fff" text-anchor="middle">?</text>
<use href="#dots" x="154" y="635"/><use href="#dots" x="154" y="703"/><use href="#dots" x="154" y="742"/><use href="#dots" x="154" y="781"/><use href="#dots" x="154" y="820"/><use href="#dots" x="154" y="849"/><use href="#dots" x="154" y="878"/><use href="#dots" x="154" y="907"/><use href="#dots" x="154" y="936"/><use href="#dots" x="154" y="965"/><use href="#dots" x="154" y="994"/>

<!-- diamonds -->
<use href="#d" x="373" y="635"/><use href="#d" x="414" y="635"/><use href="#d" x="704" y="635"/><use href="#d" x="741" y="635"/>
<use href="#p" x="777" y="635"/><use href="#p" x="777" y="664"/><use href="#p" x="1085" y="690"/><use href="#p" x="1216" y="714"/><use href="#p" x="1085" y="742"/><use href="#p" x="831" y="768"/><use href="#p" x="928" y="792"/><use href="#p" x="832" y="820"/><use href="#p" x="344" y="849"/><use href="#p" x="663" y="878"/><use href="#p" x="534" y="907"/><use href="#p" x="344" y="936"/><use href="#p" x="344" y="965"/><use href="#p" x="331" y="994"/>
<path d="M1172 712V718H1181M1178 715L1181 718 1178 720M885 787V793H894M891 790L894 793 891 795" fill="none" stroke="#fff" stroke-width="1.300"/>
<path d="M1185 714H1191L1188 717ZM898 789H904L901 792Z" fill="#c9cdea"/>

<!-- bottom toolbar -->
<g fill="#7e8aa2">
 <path d="M20 1023H26L28 1021 33 1026V1033H20Z"/><path d="M45 1021H51L53 1023H58V1033H45Z"/>
 <path d="M75 1021H78V1029H80.500L76.500 1034 72 1029H75Z"/><path d="M100 1034H103V1026H105.500L101.500 1021 97 1026H100Z"/>
 <path d="M121 1022H131V1023.500H121ZM122 1025H130V1034H122Z"/>
 <path d="M149 1026H158V1034H149Z"/>
 <ellipse cx="181.500" cy="1027" rx="6.500" ry="4.500"/>
</g>
<path d="M150.500 1026V1024A3 3 0 0 1 156.500 1024V1026" fill="none" stroke="#7e8aa2" stroke-width="1.500"/><circle cx="181.500" cy="1027" r="2" fill="#fff"/>

<!-- playhead -->
<path d="M1171.500 620V1035" stroke="#e0202c" stroke-width="1.200"/>
<path d="M1164 598H1180V612L1172 620 1164 612Z" fill="#2c82dc" stroke="#1f6cc0"/><path d="M1169 603V611M1172 603V611M1175 603V611" stroke="#cfe4fa"/>

<!-- annotations -->
<rect x="660" y="200.500" width="478.500" height="325" fill="none" stroke="#ff3a3a" stroke-width="3"/>
<rect x="7.500" y="678.500" width="1219.500" height="78" fill="none" stroke="#ff3a3a" stroke-width="3"/>
<polygon points="1000,552 1022,633 1029,631 1026,650 1014,635 1016,633" fill="#ff3a3a"/>
</svg>
</body></html>
